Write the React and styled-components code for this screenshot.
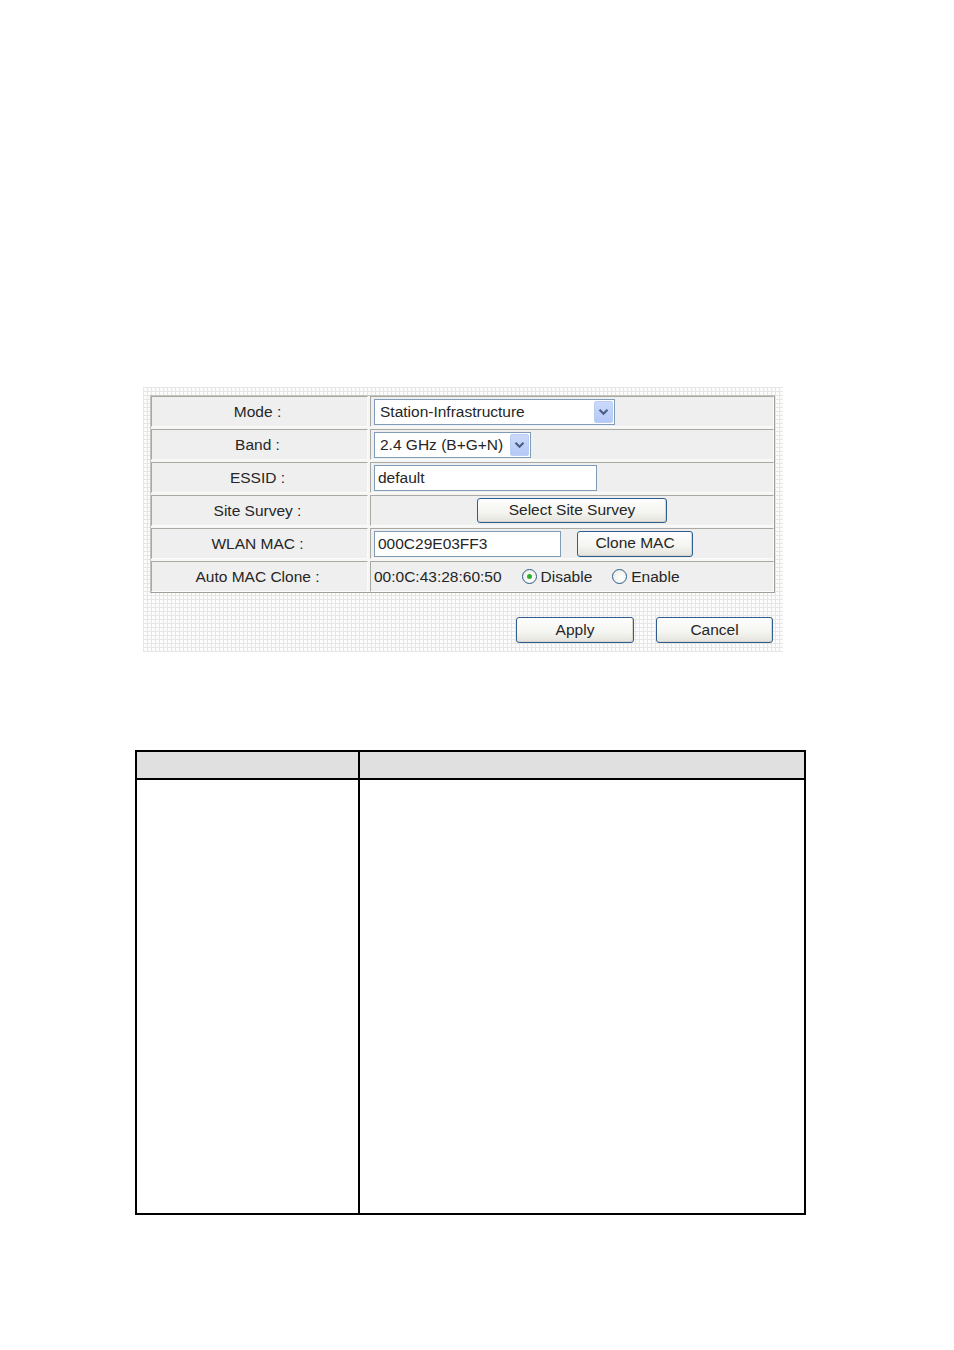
import React from "react";
import styled, { createGlobalStyle } from "styled-components";

const Global = createGlobalStyle`
  html, body { margin: 0; padding: 0; background: #fff; }
  body { font-family: "Liberation Sans", Arial, sans-serif; color: #262626; }
  * { box-sizing: border-box; }
`;

const Page = styled.div`
  width: 954px;
  height: 1350px;
  padding-top: 387px;
  display: flex;
  flex-direction: column;
`;

const Panel = styled.div`
  margin-left: 143px;
  width: 640px;
  height: 265px;
  padding: 8px 8px 0 7px;
  background-color: #fcfcfc;
  background-image:
    repeating-linear-gradient(to right, #e6e6e6 0 1px, transparent 1px 4px),
    repeating-linear-gradient(to bottom, #e6e6e6 0 1px, transparent 1px 4px);
`;

const FormGrid = styled.div`
  display: grid;
  grid-template-columns: 217px 404px;
  grid-auto-rows: 31px;
  gap: 2px;
  width: 625px;
  border: 1px solid #a8a8a0;
  border-color: #c4c4bc #a0a098 #a0a098 #c4c4bc;
  background: #f6f6f4;
`;

const Cell = styled.div`
  display: flex;
  align-items: center;
  justify-content: ${(p) => (p.$center ? "center" : "flex-start")};
  gap: ${(p) => p.$gap || 0}px;
  padding-left: ${(p) => (p.$center ? 0 : 3)}px;
  background: #efefef;
  border-top: 1px solid #a9a9a3;
  border-left: 1px solid #a9a9a3;
  border-bottom: 1px solid #fbfbfb;
  border-right: 1px solid #fbfbfb;
  font-size: 15.5px;
  white-space: nowrap;
`;

const Label = styled(Cell)`
  justify-content: center;
  padding-left: 0;
  padding-right: 4px;
`;

const SelectBox = styled.div`
  width: ${(p) => p.$w}px;
  height: 26px;
  display: flex;
  align-items: center;
  justify-content: space-between;
  border: 1px solid #7f9db9;
  background: #fff;
  padding: 1px 1px 1px 5px;
  font-size: 15.5px;
`;

const ArrowBtn = styled.div`
  width: 19px;
  height: 22px;
  display: flex;
  align-items: center;
  justify-content: center;
  background: linear-gradient(#cbdafb, #b5c9f7);
  border: 1px solid #bacdf4;
  border-radius: 2px;
`;

const TextInput = styled.div`
  width: ${(p) => p.$w}px;
  height: 26px;
  display: flex;
  align-items: center;
  border: 1px solid #7f9db9;
  background: #fff;
  padding-left: 3px;
  font-size: 15.5px;
`;

const Button = styled.div`
  width: ${(p) => p.$w}px;
  height: ${(p) => p.$h || 26}px;
  display: flex;
  align-items: center;
  justify-content: center;
  border: 1px solid #2f5d8f;
  border-radius: 3px;
  background: linear-gradient(#fefefe 0%, #f4f4f0 60%, #e4e3dc 100%);
  box-shadow: inset -1px -1px 0 #d8d6cc;
  font-size: 15.5px;
  color: #262626;
  padding-bottom: 1px;
`;

const MacText = styled.span`
  margin-right: 20px;
`;

const RadioLabel = styled.span`
  display: inline-flex;
  align-items: center;
  gap: 4px;
  margin-right: ${(p) => p.$mr || 0}px;
`;

const RadioCircle = styled.span`
  width: 15px;
  height: 15px;
  border-radius: 50%;
  border: 1px solid #2b5c89;
  background: radial-gradient(circle at 60% 60%, #fff 0%, #f0f0ea 70%, #dcdcd4 100%);
  display: inline-flex;
  align-items: center;
  justify-content: center;
`;

const RadioDot = styled.span`
  width: 5px;
  height: 5px;
  border-radius: 50%;
  background: #28b428;
`;

const ActionBar = styled.div`
  display: flex;
  justify-content: flex-end;
  gap: 22px;
  width: 625px;
  padding-right: 2px;
  margin-top: 24px;
`;

const InfoTable = styled.div`
  margin-left: 135px;
  margin-top: 98px;
  width: 671px;
  height: 465px;
  border: 2px solid #000;
  display: grid;
  grid-template-columns: 223px 1fr;
  grid-template-rows: 28px 1fr;
`;

const InfoHead = styled.div`
  background: #e0e0e0;
  border-bottom: 2px solid #000;
  border-right: ${(p) => (p.$first ? "2px solid #000" : "none")};
`;

const InfoBody = styled.div`
  border-right: ${(p) => (p.$first ? "2px solid #000" : "none")};
`;

const Chevron = () => (
  <svg width="11" height="8" viewBox="0 0 11 8">
    <path d="M1.5 1.8 L5.5 5.8 L9.5 1.8" fill="none" stroke="#4b5f86" strokeWidth="2.2" />
  </svg>
);

const Select = ({ w, children }) => (
  <SelectBox $w={w}>
    <span>{children}</span>
    <ArrowBtn>
      <Chevron />
    </ArrowBtn>
  </SelectBox>
);

const Radio = ({ checked, label, mr }) => (
  <RadioLabel $mr={mr}>
    <RadioCircle>{checked && <RadioDot />}</RadioCircle>
    {label}
  </RadioLabel>
);

export default function App() {
  return (
    <>
      <Global />
      <Page>
        <Panel>
          <FormGrid>
            <Label>Mode :</Label>
            <Cell>
              <Select w={241}>Station-Infrastructure</Select>
            </Cell>
            <Label>Band :</Label>
            <Cell>
              <Select w={157}>2.4 GHz (B+G+N)</Select>
            </Cell>
            <Label>ESSID :</Label>
            <Cell>
              <TextInput $w={223}>default</TextInput>
            </Cell>
            <Label>Site Survey :</Label>
            <Cell $center>
              <Button $w={190} $h={25}>Select Site Survey</Button>
            </Cell>
            <Label>WLAN MAC :</Label>
            <Cell $gap={16}>
              <TextInput $w={187}>000C29E03FF3</TextInput>
              <Button $w={116}>Clone MAC</Button>
            </Cell>
            <Label>Auto MAC Clone :</Label>
            <Cell>
              <MacText>00:0C:43:28:60:50</MacText>
              <Radio checked label="Disable" mr={20} />
              <Radio label="Enable" />
            </Cell>
          </FormGrid>
          <ActionBar>
            <Button $w={118}>Apply</Button>
            <Button $w={117}>Cancel</Button>
          </ActionBar>
        </Panel>
        <InfoTable>
          <InfoHead $first />
          <InfoHead />
          <InfoBody $first />
          <InfoBody />
        </InfoTable>
      </Page>
    </>
  );
}
